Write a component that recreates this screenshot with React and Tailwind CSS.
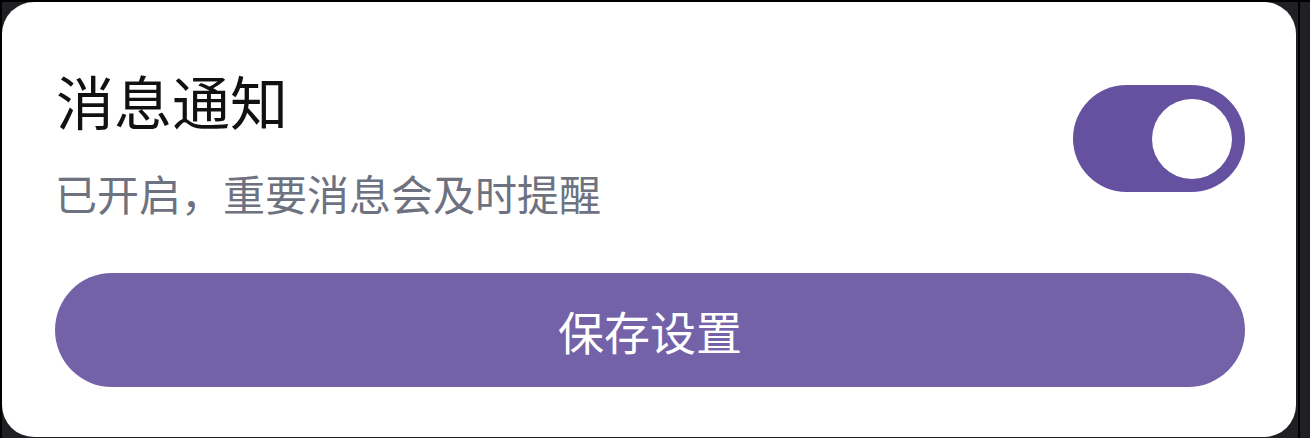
export default function App() {
  const cjk = { fontFamily: '"Noto Sans CJK SC", "Noto Sans", sans-serif' };
  return (
    <div className="w-[1310px] h-[438px] bg-[#1f2024] border-t-2 border-l-2 border-black flex items-start overflow-hidden" style={cjk}>
      <div className="w-[1294px] h-[435px] shrink-0 bg-white rounded-[32px] pt-[66px] pl-[53px] pr-[51px] flex flex-col">
        <div className="flex items-start justify-between">
          <div className="flex flex-col">
            <div className="pl-[1px] text-[58px] leading-[64px] text-[#111111]">消息通知</div>
            <div className="mt-[33px] text-[42px] leading-[56px] text-[#6e7280]">已开启，重要消息会及时提醒</div>
          </div>
          <div className="mt-[17px] w-[172px] h-[107px] rounded-full bg-[#6551a0] flex items-center justify-end pr-[13px]">
            <div className="w-[80px] h-[80px] rounded-full bg-white" />
          </div>
        </div>
        <button className="mt-[52px] h-[114px] w-full rounded-full bg-[#7462a8] text-white text-[46px] leading-none flex items-center justify-center">
          保存设置
        </button>
      </div>
      <div className="w-[2px] h-full ml-[2px] bg-black shrink-0" />
    </div>
  );
}
